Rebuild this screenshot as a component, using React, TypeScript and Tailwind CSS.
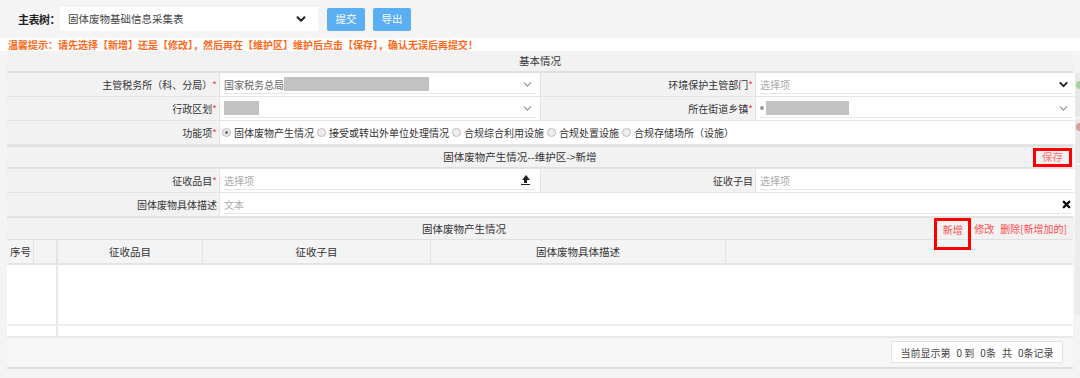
import { ChevronDown, X } from 'lucide-react';

const font = { fontFamily: '"Noto Sans CJK SC", "Noto Sans", sans-serif' };

function Star() {
  return <span className="text-[#ff3b3b]">*</span>;
}

function Label({ children, req }: { children: React.ReactNode; req?: boolean }) {
  return (
    <div className="flex items-center justify-end bg-[#f2f2f2] pr-[2px] text-[10px] text-[#333]">
      {children}
      {req && <Star />}
    </div>
  );
}

function Field({ children, chevron, dark }: { children?: React.ReactNode; chevron?: boolean; dark?: boolean }) {
  return (
    <div className="flex items-center bg-white px-[4px]">
      <div className="flex h-[19px] flex-1 items-center border-b border-[#e6e6e6] text-[10px]">
        <div className="flex flex-1 items-center">{children}</div>
        {chevron && (
          <ChevronDown
            className={dark ? 'mr-[2px] h-[13px] w-[13px] text-[#222]' : 'mr-[2px] h-[13px] w-[13px] text-[#999]'}
            strokeWidth={dark ? 3.5 : 2.5}
          />
        )}
      </div>
    </div>
  );
}

function Placeholder({ text }: { text: string }) {
  return <span className="text-[#aaa]">{text}</span>;
}

function Radio({ checked, label }: { checked?: boolean; label: string }) {
  return (
    <span className="mr-[3px] inline-flex items-center">
      <span className="mr-[3px] flex h-[9px] w-[9px] items-center justify-center rounded-full border border-[#bbb] bg-[#eee]">
        {checked && <span className="h-[3px] w-[3px] rounded-full bg-[#666]" />}
      </span>
      {label}
    </span>
  );
}

export default function App() {
  return (
    <div className="h-[378px] w-[1080px] overflow-hidden bg-[#f4f4f4] text-[#333]" style={font}>
      {/* top bar */}
      <div className="flex h-[38px] items-center pl-[18px]">
        <span className="text-[11px] font-bold tracking-[-0.5px] text-[#222]">主表树：</span>
        <div className="flex h-[24px] w-[258px] items-center justify-between bg-white pl-[8px] pr-[10px] text-[10.5px] text-[#444]">
          <span>固体废物基础信息采集表</span>
          <ChevronDown className="h-[14px] w-[14px] text-[#222]" strokeWidth={3.5} />
        </div>
        <button className="ml-[9px] h-[23px] w-[38px] rounded-[2px] bg-[#5aaef2] text-[10.5px] text-white">提交</button>
        <button className="ml-[8px] h-[23px] w-[38px] rounded-[2px] bg-[#5aaef2] text-[10.5px] text-white">导出</button>
      </div>
      <div className="h-[13px] bg-white pl-[8px] text-[10px] font-bold leading-[13px] text-[#ff6a1a]">
        温馨提示：请先选择【新增】还是【修改】，然后再在【维护区】维护后点击【保存】，确认无误后再提交！
      </div>

      <div className="flex">
        {/* main panel */}
        <div className="ml-[7px] w-[1066px] bg-[#e4e4e4]">
          <div className="flex h-[22px] items-center justify-center border-b-[2px] border-[#e0e0e0] bg-[#f2f2f2] text-[10.5px]">基本情况</div>

          <div className="grid grid-cols-[212px_320px_214px_320px] gap-x-[1px] gap-y-[1px] [&>div]:h-[23px]">
            <Label req>主管税务所（科、分局）</Label>
            <Field chevron>
              <span className="text-[#666]">国家税务总局</span>
              <span className="h-[14px] w-[145px] bg-[#c2c2c2]" />
            </Field>
            <Label req>环境保护主管部门</Label>
            <Field chevron dark>
              <Placeholder text="选择项" />
            </Field>

            <Label req>行政区划</Label>
            <Field chevron>
              <span className="h-[14px] w-[35px] bg-[#c2c2c2]" />
            </Field>
            <Label req>所在街道乡镇</Label>
            <Field chevron>
              <span className="mr-[2px] h-[4px] w-[4px] rounded-full bg-[#999]" />
              <span className="h-[14px] w-[83px] bg-[#c2c2c2]" />
            </Field>

            <Label req>功能项</Label>
            <div className="col-span-3 flex items-center bg-white pl-[2px] text-[10px] text-[#333]">
              <Radio checked label="固体废物产生情况" />
              <Radio label="接受或转出外单位处理情况" />
              <Radio label="合规综合利用设施" />
              <Radio label="合规处置设施" />
              <Radio label="合规存储场所（设施）" />
            </div>
          </div>

          <div className="mt-[2px] flex h-[22px] items-center border-y border-[#e0e0e0] bg-[#f2f2f2] text-[10.5px]">
            <span className="flex-1 text-center">固体废物产生情况--维护区-&gt;新增</span>
            <span className="mr-[1px] flex h-[19px] w-[39px] items-center justify-center border-[3px] border-[#ff0000] text-[10.5px] text-[#ff7070]">
              保存
            </span>
          </div>

          <div className="grid grid-cols-[212px_320px_214px_320px] gap-x-[1px] gap-y-[1px] pt-[1px] [&>div]:h-[23px]">
            <Label req>征收品目</Label>
            <Field>
              <span className="flex-1">
                <Placeholder text="选择项" />
              </span>
              <span className="mr-[6px] flex flex-col items-center">
                <span className="h-0 w-0 border-x-[4px] border-b-[5px] border-x-transparent border-b-[#222]" />
                <span className="h-[3px] w-[3px] bg-[#222]" />
                <span className="mt-[1px] h-[1.5px] w-[9px] bg-[#222]" />
              </span>
            </Field>
            <Label>征收子目</Label>
            <Field>
              <Placeholder text="选择项" />
            </Field>

            <Label>固体废物具体描述</Label>
            <div className="col-span-3 flex items-center bg-white px-[4px]">
              <div className="flex h-[19px] flex-1 items-center border-b border-[#e6e6e6] text-[10px]">
                <span className="flex-1">
                  <Placeholder text="文本" />
                </span>
                <X className="h-[11px] w-[11px] text-black" strokeWidth={5} />
              </div>
            </div>
          </div>

          <div className="mt-[1px] flex h-[23px] items-center border-y border-[#e0e0e0] bg-[#f2f2f2] text-[10.5px]">
            <span className="flex-1 pl-[415px] text-left">固体废物产生情况</span>
            <div className="mr-[6px] flex items-center text-[10px] text-[#ff4d4d]">
              <span className="-my-[6px] mt-[4px] flex h-[32px] w-[37px] items-center justify-center border-[3px] border-[#ff0000] pb-[8px]">新增</span>
              <span className="ml-[3px]">修改</span>
              <span className="ml-[6px]">删除[新增加的]</span>
            </div>
          </div>

          {/* table */}
          <div className="flex h-[25px] border-b-[2px] border-[#e4e4e4] bg-[#f4f4f4] text-[10.5px] [&>div]:flex [&>div]:items-center">
            <div className="w-[27px] border-r border-[#e4e4e4] pl-[3px]">序号</div>
            <div className="w-[24px] border-r-[2px] border-[#e4e4e4]" />
            <div className="w-[145px] justify-center border-r border-[#e4e4e4]">征收品目</div>
            <div className="w-[228px] justify-center border-r border-[#e4e4e4]">征收子目</div>
            <div className="w-[295px] justify-center border-r border-[#e4e4e4]">固体废物具体描述</div>
            <div className="flex-1" />
          </div>
          <div className="flex h-[61px] border-b-[2px] border-[#eee] bg-white">
            <div className="w-[51px] border-r-[2px] border-[#e8e8e8]" />
          </div>
          <div className="flex h-[12px] border-b-[2px] border-[#e8e8e8] bg-white">
            <div className="w-[51px] border-r-[2px] border-[#e8e8e8]" />
          </div>
          <div className="flex h-[31px] items-start justify-end border-b-[2px] border-[#ddd] bg-[#f6f6f6] pr-[10px] pt-[3px]">
            <div className="flex h-[22px] w-[172px] items-center justify-center gap-[6px] rounded-[2px] border border-[#e2e2e2] bg-white text-[10px] text-[#444]">
              <span>当前显示第</span>
              <span>0 到</span>
              <span>0条</span>
              <span>共</span>
              <span>0条记录</span>
            </div>
          </div>
        </div>

        {/* right edge strip */}
        <div className="ml-[2px] mt-[22px] flex w-[5px] flex-col gap-[2px]">
          <div className="h-[44px] bg-[#e8e8e8]">
            <div className="ml-[1px] mt-[8px] h-[8px] w-[4px] rounded-l-full bg-[#9fd39f]" />
          </div>
          <div className="h-[44px] bg-[#e8e8e8]">
            <div className="ml-[1px] mt-[4px] h-[8px] w-[4px] rounded-l-full bg-[#d99]" />
          </div>
          <div className="h-[150px] bg-[#ececec]" />
        </div>
      </div>
    </div>
  );
}
